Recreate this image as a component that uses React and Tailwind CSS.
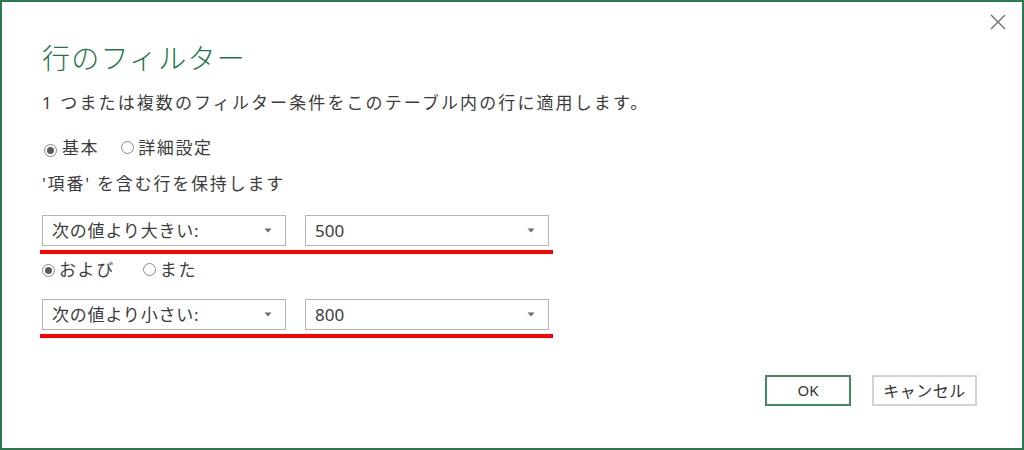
import React from "react";

function Radio({ checked }) {
  return (
    <span className="relative inline-flex w-[13px] h-[13px] rounded-full border border-[#8a8a8a] bg-white items-center justify-center shrink-0">
      {checked && <span className="w-[7px] h-[7px] rounded-full bg-[#5a5a5a]" />}
    </span>
  );
}

function Caret() {
  return (
    <svg width="8" height="5" viewBox="0 0 8 5" className="shrink-0">
      <path d="M0.5 0.5 L7.5 0.5 L4 4.5 Z" fill="#6b6b6b" />
    </svg>
  );
}

function Select({ value, wide }) {
  return (
    <div className="w-[244px] h-[31px] border border-[#b4b4b4] bg-white flex items-center pl-[9px] pr-[13px] justify-between">
      <span className={wide ? "tracking-[0.8px]" : "tracking-[0px]"}>{value}</span>
      <Caret />
    </div>
  );
}

export default function App() {
  return (
    <div className="w-[1024px] h-[450px] relative bg-white border-2 border-[#2b7a4f] text-[#3c3c3c] text-[17px] font-['Noto_Sans','Noto_Sans_CJK_JP',sans-serif] overflow-hidden">
      <button className="absolute top-[11px] right-[15px] w-[18px] h-[18px] flex items-center justify-center">
        <svg width="16" height="16" viewBox="0 0 16 16">
          <path d="M1 1 L15 15 M15 1 L1 15" stroke="#6f6f6f" strokeWidth="1.4" />
        </svg>
      </button>
      <div className="flex flex-col pl-[40px] pt-[34px]">
        <div className="h-[44px] flex items-center text-[28px] font-light text-[#21764a] tracking-[1.2px]">
          行のフィルター
        </div>
        <div className="h-[22px] mt-[12px] flex items-center tracking-[2.1px]">
          1 つまたは複数のフィルター条件をこのテーブル内の行に適用します。
        </div>
        <div className="h-[22px] mt-[23px] flex items-center tracking-[1.6px]">
          <span className="ml-[2px]"><Radio checked /></span>
          <span className="ml-[5px]">基本</span>
          <span className="ml-[22px]"><Radio /></span>
          <span className="ml-[4px]">詳細設定</span>
        </div>
        <div className="h-[22px] mt-[14px] flex items-center tracking-[1.8px]">
          '項番' を含む行を保持します
        </div>
        <div className="mt-[20px] flex gap-[19px]">
          <Select value="次の値より大きい:" wide />
          <Select value="500" />
        </div>
        <div className="mt-[4px] ml-[-2px] w-[513px] h-[4px] bg-[#ff0000]" />
        <div className="h-[22px] mt-[5px] flex items-center tracking-[1.6px]">
          <Radio checked />
          <span className="ml-[4px]">および</span>
          <span className="ml-[28px]"><Radio /></span>
          <span className="ml-[4px]">また</span>
        </div>
        <div className="mt-[18px] flex gap-[19px]">
          <Select value="次の値より小さい:" wide />
          <Select value="800" />
        </div>
        <div className="mt-[4px] ml-[-2px] w-[513px] h-[4px] bg-[#ff0000]" />
        <div className="mt-[37px] flex justify-end pr-[45px] gap-[21px]">
          <button className="w-[86px] h-[31px] border-2 border-[#3f8a5f] bg-white text-[#333] text-[15px] flex items-center justify-center">
            OK
          </button>
          <button className="w-[105px] h-[31px] border-2 border-[#d2d2d2] bg-white text-[#333] text-[16px] flex items-center justify-center tracking-[0.5px]">
            キャンセル
          </button>
        </div>
      </div>
    </div>
  );
}
